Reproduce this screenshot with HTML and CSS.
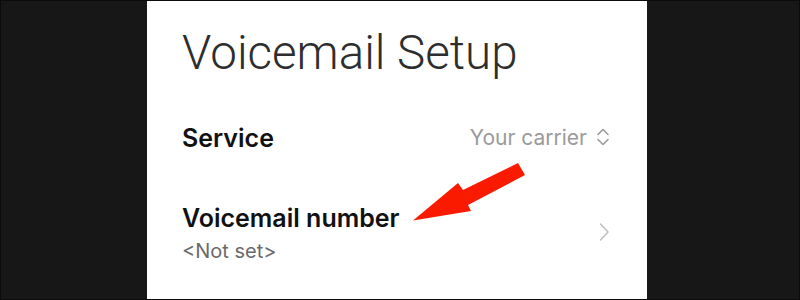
FILE: index.html
```html
<!DOCTYPE html>
<html>
<head>
<meta charset="utf-8">
<link rel="stylesheet" href="styles.css">
</head>
<body>
<div class="frame">
  <div class="panel">
    <h1 class="title">Voicemail Setup</h1>
    <div class="row">
      <div class="label">Service</div>
      <div class="value">
        <span>Your carrier</span>
        <svg class="updown" width="14" height="18" viewBox="0 0 14 18"><path d="M2 6.5 L7 1.5 L12 6.5 M2 11.5 L7 16.5 L12 11.5" fill="none" stroke="#9a9a9a" stroke-width="1.6" stroke-linejoin="round" stroke-linecap="round"/></svg>
      </div>
    </div>
    <div class="row">
      <div class="texts">
        <div class="label">Voicemail number</div>
        <div class="sub">&lt;Not set&gt;</div>
      </div>
      <svg class="chev" width="10" height="18" viewBox="0 0 10 18"><path d="M1.5 1 L9 9 L1.5 17" fill="none" stroke="#bdbdbd" stroke-width="1.5" stroke-linejoin="round" stroke-linecap="round"/></svg>
    </div>
  </div>
  <svg class="arrow" width="800" height="300" viewBox="0 0 800 300"><polygon points="413,220.5 458,183 463,190 518,163 525,175 468,205 471,211" fill="#fa1a00"/></svg>
</div>
</body>
</html>
```

FILE: styles.css
```css
html, body {
  margin: 0;
  padding: 0;
}
body {
  width: 800px;
  height: 300px;
  overflow: hidden;
  background: #171717;
  font-family: Inter, Roboto, "Liberation Sans", sans-serif;
}
.frame {
  position: relative;
  box-sizing: border-box;
  width: 800px;
  height: 300px;
  border: 1px solid rgba(0, 0, 0, 0.5);
  padding-left: 146px;
  display: flex;
}
.panel {
  width: 500px;
  height: 100%;
  background: #ffffff;
  box-sizing: border-box;
  padding: 24px 37px 0 35px;
}
.title {
  margin: 0 0 17px 0;
  font-family: Roboto, "Liberation Sans", sans-serif;
  font-weight: 300;
  font-size: 47.5px;
  line-height: 56px;
  color: #2e2e2e;
}
.row {
  display: flex;
  align-items: center;
  justify-content: space-between;
  padding: 26px 0;
}
.label {
  font-size: 25px;
  line-height: 28px;
  font-weight: 600;
  color: #111111;
}
.value {
  display: flex;
  align-items: center;
  gap: 9px;
  font-size: 21px;
  line-height: 28px;
  color: #9a9a9a;
}
.updown {
  margin-top: -3px;
}
.texts {
  display: flex;
  flex-direction: column;
  gap: 7px;
}
.sub {
  font-size: 20px;
  line-height: 24px;
  color: #6a6a6a;
}
.chev {
  margin-right: 1px;
  margin-top: -4px;
}
.arrow {
  position: absolute;
  left: -1px;
  top: -1px;
}
```
